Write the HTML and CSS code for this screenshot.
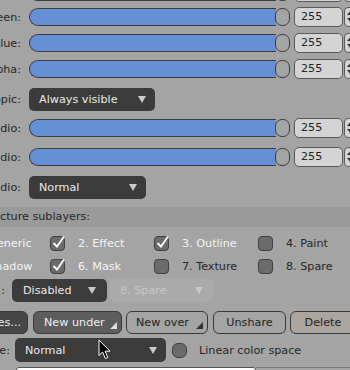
FILE: index.html
```html
<!DOCTYPE html>
<html>
<head>
<meta charset="utf-8">
<link rel="stylesheet" href="styles.css">
</head>
<body>
<div class="panel">
  <div class="field srow first">
    <span class="lbl"></span>
    <div class="slider"><div class="fill"></div><div class="knob"></div></div>
    <div class="spin"><span class="val"></span><span class="arrows"><i class="up"></i><i class="dn"></i></span></div>
  </div>
  <div class="field srow">
    <span class="lbl"><span>een:</span></span>
    <div class="slider"><div class="fill"></div><div class="knob"></div></div>
    <div class="spin"><span class="val">255</span><span class="arrows"><i class="up"></i><i class="dn"></i></span></div>
  </div>
  <div class="field srow">
    <span class="lbl"><span>lue:</span></span>
    <div class="slider"><div class="fill"></div><div class="knob"></div></div>
    <div class="spin"><span class="val">255</span><span class="arrows"><i class="up"></i><i class="dn"></i></span></div>
  </div>
  <div class="field srow">
    <span class="lbl"><span>pha:</span></span>
    <div class="slider"><div class="fill"></div><div class="knob"></div></div>
    <div class="spin"><span class="val">255</span><span class="arrows"><i class="up"></i><i class="dn"></i></span></div>
  </div>
  <div class="field drow topic-row">
    <span class="lbl"><span>opic:</span></span>
    <div class="dd dd-topic"><span>Always visible</span><svg class="caret" width="8" height="7" viewBox="0 0 8 7"><path d="M0 0H8L4 7Z"/></svg></div>
  </div>
  <div class="field srow gap7">
    <span class="lbl"><span>dio:</span></span>
    <div class="slider"><div class="fill"></div><div class="knob"></div></div>
    <div class="spin"><span class="val">255</span><span class="arrows"><i class="up"></i><i class="dn"></i></span></div>
  </div>
  <div class="field srow gap9">
    <span class="lbl"><span>dio:</span></span>
    <div class="slider"><div class="fill"></div><div class="knob"></div></div>
    <div class="spin"><span class="val">255</span><span class="arrows"><i class="up"></i><i class="dn"></i></span></div>
  </div>
  <div class="field drow gap9">
    <span class="lbl"><span>dio:</span></span>
    <div class="dd dd-normal"><span>Normal</span><svg class="caret" width="8" height="7" viewBox="0 0 8 7"><path d="M0 0H8L4 7Z"/></svg></div>
  </div>

  <div class="band">cture sublayers:</div>

  <div class="subs">
    <div class="sub on"><span class="cb"><svg width="17" height="17" viewBox="0 0 17 17"><path d="M3.5 8 L7 11.5 L14 1.5"/></svg></span><span class="sl">1. Generic</span></div>
    <div class="sub on"><span class="cb"><svg width="17" height="17" viewBox="0 0 17 17"><path d="M3.5 8 L7 11.5 L14 1.5"/></svg></span><span class="sl">2. Effect</span></div>
    <div class="sub on"><span class="cb"><svg width="17" height="17" viewBox="0 0 17 17"><path d="M3.5 8 L7 11.5 L14 1.5"/></svg></span><span class="sl">3. Outline</span></div>
    <div class="sub"><span class="cb"></span><span class="sl">4. Paint</span></div>
    <div class="sub on"><span class="cb"><svg width="17" height="17" viewBox="0 0 17 17"><path d="M3.5 8 L7 11.5 L14 1.5"/></svg></span><span class="sl">5. Shadow</span></div>
    <div class="sub on"><span class="cb"><svg width="17" height="17" viewBox="0 0 17 17"><path d="M3.5 8 L7 11.5 L14 1.5"/></svg></span><span class="sl">6. Mask</span></div>
    <div class="sub"><span class="cb"></span><span class="sl">7. Texture</span></div>
    <div class="sub"><span class="cb"></span><span class="sl">8. Spare</span></div>
  </div>

  <div class="field mode-row">
    <span class="lbl lbl-colon"><span>:</span></span>
    <div class="dd dd-dis"><span>Disabled</span><svg class="caret" width="8" height="7" viewBox="0 0 8 7"><path d="M0 0H8L4 7Z"/></svg></div>
    <div class="dd dd-off"><span>8. Spare</span><svg class="caret" width="8" height="7" viewBox="0 0 8 7"><path d="M0 0H8L4 7Z"/></svg></div>
  </div>

  <div class="btns">
    <div class="btn b-dark">es...</div>
    <div class="btn b-under">New under<i class="tri"></i></div>
    <div class="btn b-over">New over<i class="tri"></i></div>
    <div class="btn b-unshare">Unshare</div>
    <div class="btn b-delete">Delete</div>
  </div>

  <div class="field blend-row">
    <span class="lbl lbl-e"><span>e:</span></span>
    <div class="dd dd-blend"><span>Normal</span><svg class="caret" width="8" height="7" viewBox="0 0 8 7"><path d="M0 0H8L4 7Z"/></svg></div>
    <span class="cb cb-round"></span>
    <span class="lin">Linear color space</span>
  </div>

  <div class="bottom"><div class="entry"></div><div class="rest"></div></div>
</div>

<svg class="cursor" width="13" height="21" viewBox="0 0 13 21"><path d="M1 1 L1 16.5 L4.6 13 L7.4 19.6 L9.8 18.6 L7.1 12.2 L12 12.2 Z"/></svg>
</body>
</html>
```

FILE: styles.css
```css
* { box-sizing: border-box; }

body {
  margin: 0;
  width: 350px;
  height: 370px;
  overflow: hidden;
  position: relative;
  background: #a4a4a4;
  font-family: "DejaVu Sans", sans-serif;
  font-size: 11.2px;
  color: #272727;
}

.panel {
  display: flex;
  flex-direction: column;
  width: 380px;
}

.field {
  display: flex;
  align-items: center;
  height: 20px;
  flex: none;
}

.srow { margin-top: 6px; }
.srow.first { margin-top: -18px; }
.srow.first + .srow { margin-top: 5px; }
.gap7 { margin-top: 7px; }
.gap9 { margin-top: 9px; }

.drow { height: 23px; }
.topic-row { margin-top: 9px; }

.lbl {
  width: 21px;
  flex: none;
  display: flex;
  justify-content: flex-end;
  white-space: nowrap;
  margin-right: 8px;
}

.slider {
  display: flex;
  width: 261px;
  height: 18px;
  flex: none;
}

.fill {
  flex: 1;
  background: #6690d5;
  border: 1px solid #3d3d3d;
  border-right: 0;
  border-radius: 9px 0 0 9px;
}

.knob {
  width: 15px;
  height: 18px;
  margin-left: -1px;
  border: 1px solid #3d3d3d;
  border-radius: 7px;
  background: #a4a4a4;
}

.spin {
  display: flex;
  height: 20px;
  margin-left: 4px;
}

.val {
  width: 49px;
  background: #d4d4d4;
  border: 1px solid #5a5a5a;
  border-radius: 5px;
  padding-left: 6px;
  line-height: 18px;
  color: #222;
}

.arrows {
  width: 14px;
  margin-left: 1px;
  background: #d4d4d4;
  border: 1px solid #5a5a5a;
  border-radius: 4px;
  display: flex;
  flex-direction: column;
  justify-content: space-between;
  align-items: center;
  padding: 2px 0 3px;
}

.arrows i {
  width: 0;
  height: 0;
  border-left: 4px solid transparent;
  border-right: 4px solid transparent;
}
.arrows .up { border-bottom: 5px solid #333; }
.arrows .dn { border-top: 5px solid #333; }

.dd {
  display: flex;
  align-items: center;
  justify-content: space-between;
  height: 23px;
  background: #3b3b3b;
  border-radius: 5px;
  color: #e9e9e9;
  padding: 0 9px 0 10px;
  white-space: nowrap;
  flex: none;
}

.caret { fill: #c9c9c9; }

.dd-topic { width: 126px; }
.dd-normal { width: 117px; }

.band {
  margin-top: 8px;
  height: 20px;
  line-height: 20px;
  background: #9a9a9a;
  white-space: nowrap;
}

.subs {
  margin-top: 6px;
  margin-left: -54px;
  display: grid;
  grid-template-columns: repeat(4, 104px);
  row-gap: 2px;
}

.sub {
  display: flex;
  align-items: center;
  gap: 13px;
  height: 21px;
  white-space: nowrap;
}

.cb {
  position: relative;
  flex: none;
  width: 15px;
  height: 15px;
  background: #6b6b6b;
  border: 1px solid #404040;
  border-radius: 4px;
}

.cb svg {
  position: absolute;
  left: -1px;
  top: -2px;
  overflow: visible;
  fill: none;
  stroke: #ffffff;
  stroke-width: 1.8;
}

.sub.on .sl { color: #f3f3f3; }

.mode-row {
  margin-top: 2px;
  height: 23px;
}

.lbl-colon {
  width: 5px;
  margin-right: 7px;
}

.dd-dis {
  width: 95px;
  padding: 0 11px 0 11px;
}

.dd-off {
  width: 103px;
  margin-left: 3px;
  background: #abaaaa;
  color: #c6c6c6;
  padding: 0 10px 0 10px;
}
.dd-off .caret { fill: #c6c6c6; }

.btns {
  display: flex;
  margin-top: 9px;
  margin-left: -12px;
  height: 23px;
}

.btn {
  position: relative;
  height: 23px;
  border: 1px solid #3a3a3a;
  border-radius: 6px;
  display: flex;
  align-items: center;
  white-space: nowrap;
  flex: none;
  color: #232323;
}

.tri {
  position: absolute;
  right: 4px;
  bottom: 4px;
  width: 0;
  height: 0;
  border-left: 7px solid transparent;
  border-bottom: 7px solid #333;
}

.b-dark {
  width: 40px;
  justify-content: flex-end;
  padding-right: 6px;
  background: #474747;
  color: #ececec;
}

.b-under {
  width: 89px;
  margin-left: 5px;
  padding-left: 10px;
  background: #5d5d5d;
  color: #f0f0f0;
}
.b-under .tri { border-bottom-color: #e0e0e0; }

.b-over {
  width: 82px;
  margin-left: 4px;
  padding-left: 9px;
}

.b-unshare {
  width: 73px;
  margin-left: 5px;
  justify-content: center;
}

.b-delete {
  width: 66px;
  margin-left: 4px;
  justify-content: center;
  background: #aca49f;
}

.blend-row {
  margin-top: 4px;
  height: 24px;
}

.lbl-e {
  width: 10px;
  margin-right: 5px;
}

.dd-blend {
  width: 151px;
  height: 24px;
}

.cb-round {
  margin-left: 6px;
  border-radius: 6px;
}

.lin {
  margin-left: 12px;
  white-space: nowrap;
}

.bottom {
  display: flex;
  margin-top: 5px;
  margin-left: 16px;
  height: 12px;
}

.entry {
  width: 240px;
  background: #ffffff;
  border: 1px solid #555;
  border-radius: 3px 3px 0 0;
}

.rest {
  flex: 1;
  border-top: 1px solid #7a7a7a;
}

.cursor {
  position: absolute;
  left: 98px;
  top: 339px;
  fill: #000;
  stroke: #fff;
  stroke-width: 1;
}
```
